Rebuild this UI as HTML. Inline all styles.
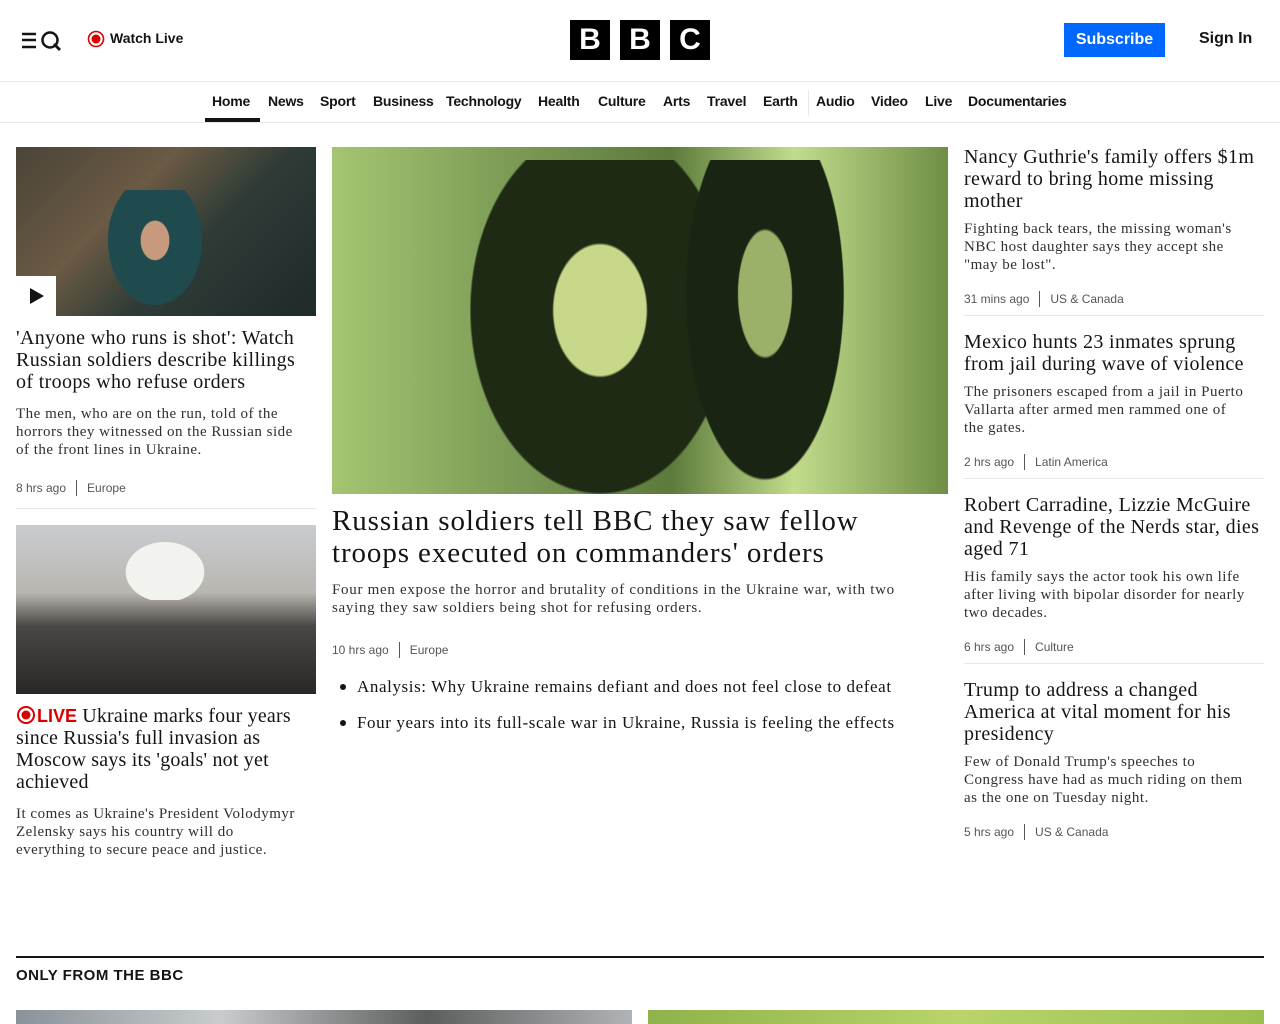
<!DOCTYPE html>
<html><head><meta charset="utf-8"><style>
*{margin:0;padding:0;box-sizing:border-box}
body{width:1280px;height:1024px;overflow:hidden;background:#fff;font-family:"Liberation Sans",sans-serif;color:#141414;position:relative}
.a{position:absolute}
.serif{font-family:"Liberation Serif",serif}
h3{font-family:"Liberation Serif",serif;font-weight:400;font-size:20px;line-height:22px;color:#141414;letter-spacing:0.35px;white-space:nowrap}
p.d{font-family:"Liberation Serif",serif;font-size:15px;line-height:18px;color:#303030;white-space:nowrap;letter-spacing:0.5px}
.meta{font-size:12px;color:#545658;display:flex;align-items:center}
.meta span.s{display:inline-block;width:1px;height:16px;background:#545658;margin:0 10px}
.nav{position:absolute;top:81px;left:0;width:1280px;height:42px;border-top:1px solid #e6e8ea;border-bottom:1px solid #e6e8ea}
.nav a{position:absolute;top:11px;font-size:14px;font-weight:bold;color:#141414;text-decoration:none;letter-spacing:-0.2px}
hr.sep{position:absolute;border:0;height:1px;background:#e6e8ea}
</style></head><body>
<svg class="a" style="left:21px;top:30px" width="42" height="22" viewBox="0 0 42 22">
<path d="M1 4h14M1 10h14M1 17h14" stroke="#141414" stroke-width="2.5"/>
<circle cx="29" cy="10" r="7.5" fill="none" stroke="#141414" stroke-width="2.5"/>
<path d="M33 14l6 6" stroke="#141414" stroke-width="2.8"/>
</svg>
<svg class="a" style="left:87px;top:30px" width="18" height="18"><circle cx="9" cy="9" r="7.5" fill="none" stroke="#d90000" stroke-width="1.6"/><circle cx="9" cy="9" r="4.5" fill="#d90000"/></svg>
<div class="a" style="left:110px;top:30px;font-size:14px;font-weight:bold">Watch Live</div>
<div class="a" style="left:570px;top:20px;width:40px;height:40px;background:#000;color:#fff;font-weight:bold;font-size:30px;text-align:center;line-height:40px">B</div>
<div class="a" style="left:620px;top:20px;width:40px;height:40px;background:#000;color:#fff;font-weight:bold;font-size:30px;text-align:center;line-height:40px">B</div>
<div class="a" style="left:670px;top:20px;width:40px;height:40px;background:#000;color:#fff;font-weight:bold;font-size:30px;text-align:center;line-height:40px">C</div>
<div class="a" style="left:1064px;top:23px;width:101px;height:34px;background:#0168ff;color:#fff;font-weight:bold;font-size:16px;text-align:center;line-height:34px">Subscribe</div>
<div class="a" style="left:1199px;top:30px;font-size:16px;font-weight:bold">Sign In</div>
<div class="nav">
<a style="left:212px">Home</a><div class="a" style="left:205px;top:36px;width:55px;height:4px;background:#141414"></div>
<a style="left:268px">News</a><a style="left:320px">Sport</a><a style="left:373px">Business</a><a style="left:446px">Technology</a><a style="left:538px">Health</a><a style="left:598px">Culture</a><a style="left:663px">Arts</a><a style="left:707px">Travel</a><a style="left:763px">Earth</a>
<div class="a" style="left:808px;top:8px;width:1px;height:26px;background:#e6e8ea"></div>
<a style="left:816px">Audio</a><a style="left:871px">Video</a><a style="left:925px">Live</a><a style="left:968px">Documentaries</a>
</div>
<div class="a" style="left:16px;top:147px;width:300px;height:169px;background:linear-gradient(135deg,#4a4438 0%,#6b5a44 35%,#2e3b36 60%,#1e2a2b 100%)"></div>
<div class="a" style="left:100px;top:190px;width:110px;height:126px;background:radial-gradient(ellipse at 50% 40%,#c79a7e 0 18%,#1f4a4e 19% 60%,transparent 61%)"></div>
<div class="a" style="left:16px;top:276px;width:40px;height:40px;background:#fff"></div>
<svg class="a" style="left:28px;top:287px" width="18" height="18"><path d="M2 1l14 8-14 8z" fill="#141414"/></svg>
<h3 class="a" style="left:16px;top:327px">'Anyone who runs is shot': Watch<br>Russian soldiers describe killings<br>of troops who refuse orders</h3>
<p class="d a" style="left:16px;top:405px">The men, who are on the run, told of the<br>horrors they witnessed on the Russian side<br>of the front lines in Ukraine.</p>
<div class="meta a" style="left:16px;top:480px">8 hrs ago<span class="s"></span>Europe</div>
<hr class="sep" style="left:16px;top:508px;width:300px">
<div class="a" style="left:16px;top:525px;width:300px;height:169px;background:linear-gradient(180deg,#c9ccd0 0%,#b8b6b0 40%,#4a4644 60%,#2a2827 100%)"></div>
<div class="a" style="left:110px;top:530px;width:110px;height:70px;background:radial-gradient(ellipse at 50% 60%,#f2f2ee 0 50%,transparent 51%)"></div>
<div class="a" style="left:16px;top:705px;white-space:nowrap;font-family:'Liberation Serif',serif;font-size:20px;line-height:22px;letter-spacing:0.2px"><span style="font-family:'Liberation Sans',sans-serif;font-weight:bold;color:#d90000;font-size:18px;letter-spacing:0"><svg width="21" height="18" style="vertical-align:-2px"><circle cx="10" cy="9" r="8" fill="none" stroke="#d90000" stroke-width="2"/><circle cx="10" cy="9" r="4.5" fill="#d90000"/></svg>LIVE</span> Ukraine marks four years<br>since Russia's full invasion as<br>Moscow says its 'goals' not yet<br>achieved</div>
<p class="d a" style="left:16px;top:805px">It comes as Ukraine's President Volodymyr<br>Zelensky says his country will do<br>everything to secure peace and justice.</p>
<div class="a" style="left:332px;top:147px;width:616px;height:347px;background:linear-gradient(90deg,#a5c572 0%,#7a9a55 30%,#5c7a3a 55%,#c2dc8c 75%,#6f8e45 100%)"></div>
<div class="a" style="left:470px;top:160px;width:260px;height:334px;background:radial-gradient(ellipse at 50% 45%,#c7d88a 0 25%,#1e2a14 26% 70%,transparent 71%)"></div>
<div class="a" style="left:680px;top:160px;width:170px;height:334px;background:radial-gradient(ellipse at 50% 40%,#9bb068 0 22%,#1a2412 23% 65%,transparent 66%)"></div>
<div class="a serif" style="left:332px;top:505px;white-space:nowrap;font-size:29px;line-height:32px;letter-spacing:0.9px">Russian soldiers tell BBC they saw fellow<br>troops executed on commanders' orders</div>
<p class="d a" style="left:332px;top:581px;letter-spacing:0.7px">Four men expose the horror and brutality of conditions in the Ukraine war, with two<br>saying they saw soldiers being shot for refusing orders.</p>
<div class="meta a" style="left:332px;top:642px">10 hrs ago<span class="s"></span>Europe</div>
<div class="a" style="left:340px;top:684px;width:6px;height:6px;border-radius:50%;background:#141414"></div>
<div class="a" style="left:340px;top:720px;width:6px;height:6px;border-radius:50%;background:#141414"></div>
<div class="a serif" style="left:357px;top:677px;font-size:17px;line-height:20px;letter-spacing:0.6px;white-space:nowrap">Analysis: Why Ukraine remains defiant and does not feel close to defeat</div>
<div class="a serif" style="left:357px;top:713px;font-size:17px;line-height:20px;letter-spacing:0.6px;white-space:nowrap">Four years into its full-scale war in Ukraine, Russia is feeling the effects</div>
<h3 class="a" style="left:964px;top:146px">Nancy Guthrie's family offers $1m<br>reward to bring home missing<br>mother</h3>
<p class="d a" style="left:964px;top:220px">Fighting back tears, the missing woman's<br>NBC host daughter says they accept she<br>"may be lost".</p>
<div class="meta a" style="left:964px;top:291px">31 mins ago<span class="s"></span>US &amp; Canada</div>
<hr class="sep" style="left:964px;top:315px;width:300px">
<h3 class="a" style="left:964px;top:331px">Mexico hunts 23 inmates sprung<br>from jail during wave of violence</h3>
<p class="d a" style="left:964px;top:383px">The prisoners escaped from a jail in Puerto<br>Vallarta after armed men rammed one of<br>the gates.</p>
<div class="meta a" style="left:964px;top:454px">2 hrs ago<span class="s"></span>Latin America</div>
<hr class="sep" style="left:964px;top:478px;width:300px">
<h3 class="a" style="left:964px;top:494px">Robert Carradine, Lizzie McGuire<br>and Revenge of the Nerds star, dies<br>aged 71</h3>
<p class="d a" style="left:964px;top:568px">His family says the actor took his own life<br>after living with bipolar disorder for nearly<br>two decades.</p>
<div class="meta a" style="left:964px;top:639px">6 hrs ago<span class="s"></span>Culture</div>
<hr class="sep" style="left:964px;top:663px;width:300px">
<h3 class="a" style="left:964px;top:679px">Trump to address a changed<br>America at vital moment for his<br>presidency</h3>
<p class="d a" style="left:964px;top:753px">Few of Donald Trump's speeches to<br>Congress have had as much riding on them<br>as the one on Tuesday night.</p>
<div class="meta a" style="left:964px;top:824px">5 hrs ago<span class="s"></span>US &amp; Canada</div>
<div class="a" style="left:16px;top:956px;width:1248px;height:2px;background:#141414"></div>
<div class="a" style="left:16px;top:967px;font-size:15px;font-weight:bold;letter-spacing:0.5px">ONLY FROM THE BBC</div>
<div class="a" style="left:16px;top:1010px;width:616px;height:14px;background:linear-gradient(90deg,#8a9298,#c8ccce,#5a5e5c,#b0b4b6)"></div>
<div class="a" style="left:648px;top:1010px;width:616px;height:14px;background:linear-gradient(90deg,#8fb24a,#b8d46a,#9cc050)"></div>
</body></html>
